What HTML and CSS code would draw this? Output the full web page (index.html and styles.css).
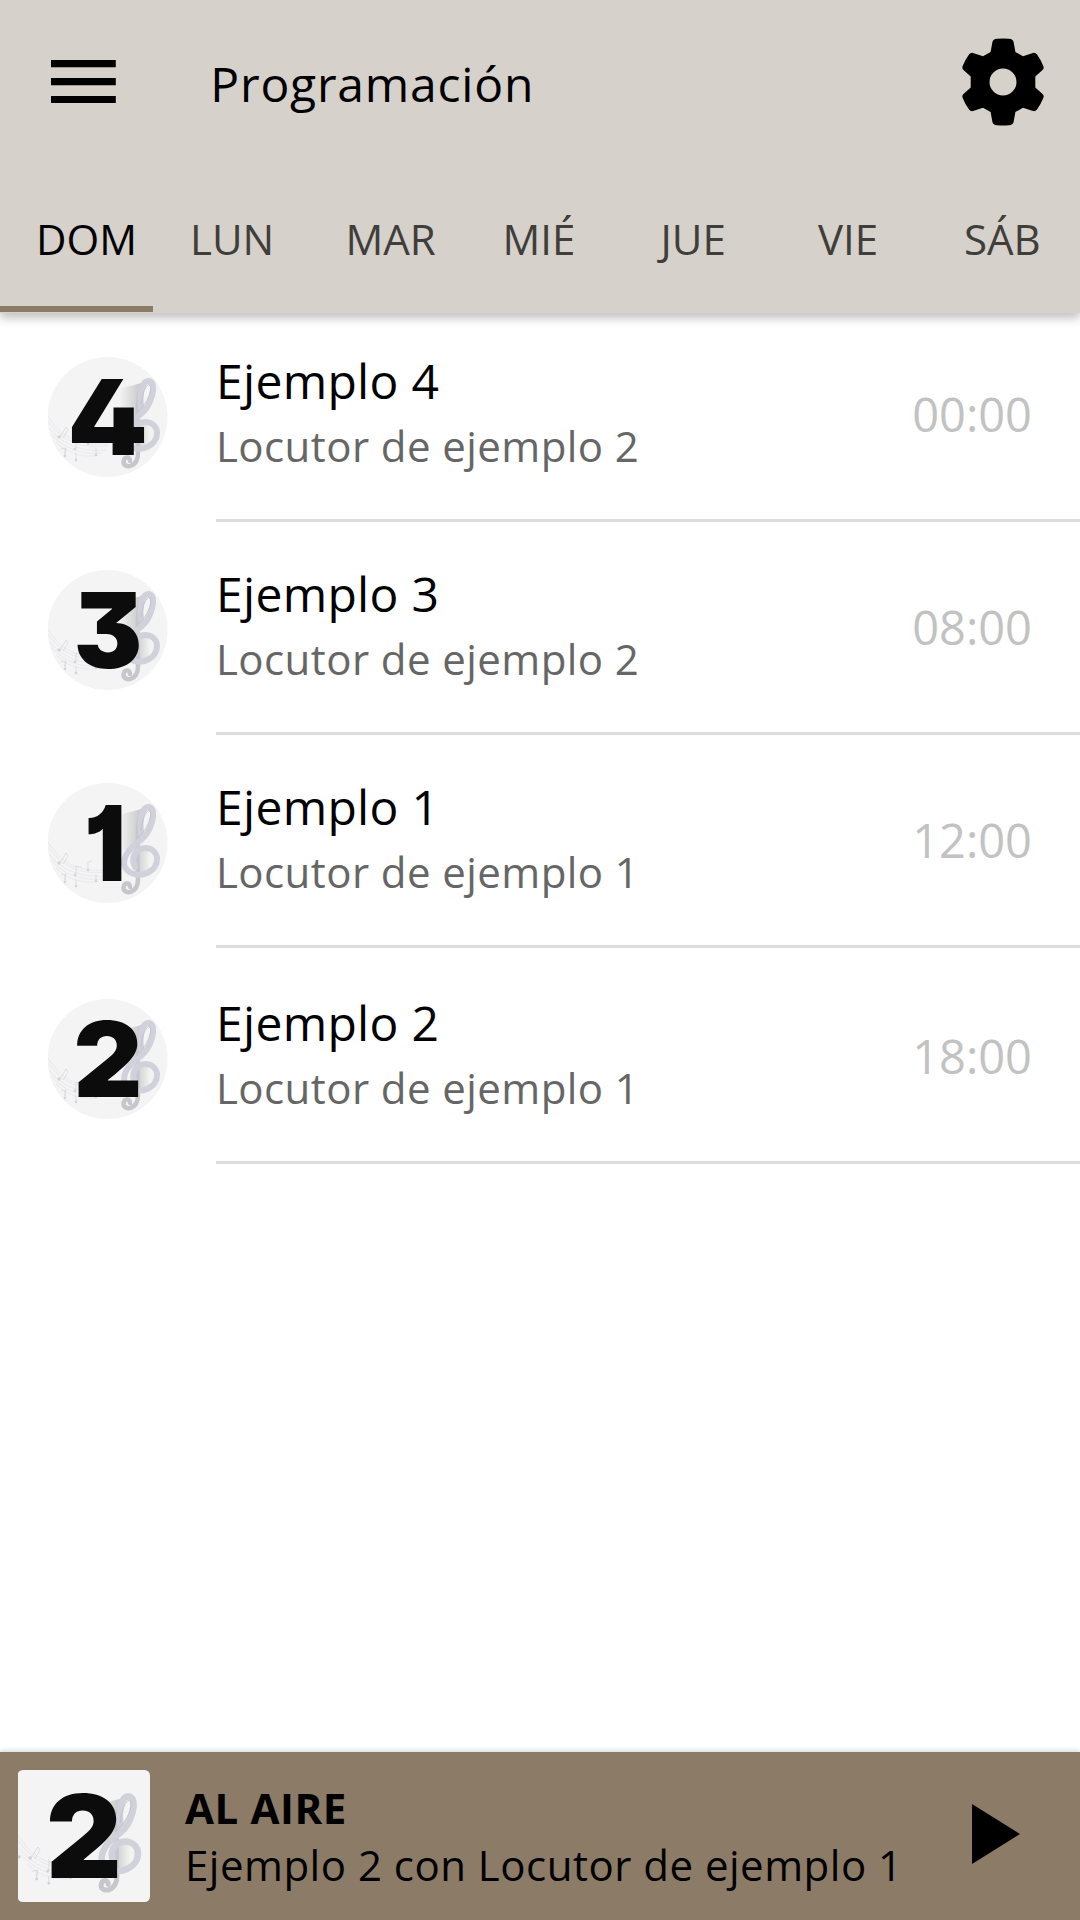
FILE: index.html
```html
<!DOCTYPE html>
<html lang="es">
<head>
<meta charset="utf-8">
<title>Programación</title>
<link rel="stylesheet" href="styles.css">
</head>
<body>
<svg class="defs" aria-hidden="true">
  <defs>
    <linearGradient id="shade" x1="0" x2="1">
      <stop offset="0" stop-color="#f4f4f4"/><stop offset="1" stop-color="#c0c0c1"/>
    </linearGradient>
    <linearGradient id="bowl" x1="0" x2="1">
      <stop offset="0" stop-color="#c0c0c2"/><stop offset=".7" stop-color="#f3f3f1"/>
    </linearGradient>
    <symbol id="music" viewBox="0 0 120 120">
      <rect width="120" height="120" fill="#f4f4f5"/>
      <path d="M71 32 97 25 91 62 74 68Z" fill="url(#shade)"/>
      <circle cx="97" cy="78" r="13" fill="url(#bowl)"/>
      <g fill="none" stroke="#e2e2e8" stroke-width=".6">
        <path d="M0 59C12 79 28 89 60 87M0 64C14 83 30 92 60 89M1 71C14 87 32 95 58 93M3 77C16 91 32 98 54 96M8 85C18 95 30 100 48 99"/>
      </g>
      <g fill="#d0d0d8" stroke="#d0d0d8" stroke-width=".6">
        <path d="M12 80 18 70 20 73 15 81M28 92V83L33 84M17 92V99M40 86V79L44 78M13 92 18 91 17 97M28 96V103M48 91V98" fill="none"/>
        <circle cx="11" cy="80" r="1.300"/><circle cx="1" cy="79" r="1.200"/><circle cx="27" cy="92" r="1"/><circle cx="40" cy="87" r="1"/><circle cx="17" cy="99" r="1"/><circle cx="28" cy="103" r="1"/><circle cx="48" cy="98" r="1"/>
      </g>
      <path d="M93 32C88 44 91 55 89 67L90 96C90 111 76 112 75.500 105C76 99 82 99 82 104" fill="none" stroke="#c6c6cc" stroke-width="4.500" stroke-linecap="round"/>
      <path d="M94 54C90 36 95 23 101 24C110 26 103 49 93 57C81 65 76 73 76 81C78 91 91 94 99 90C113 84 112 66 98 65C86 65 83 76 87 84" fill="none" stroke="#d0d1db" stroke-width="6" stroke-linecap="round" stroke-linejoin="round"/>
      <path d="M93 48C94 35 99 26 102 28C105 33 99 46 91 54" fill="none" stroke="#bfc0c8" stroke-width=".8"/>
    </symbol>
  </defs>
</svg>

<div class="app">
  <header class="header">
    <div class="toolbar">
      <svg class="menu-icon" viewBox="0 0 18 12"><path d="M0 0h18v2H0zM0 5h18v2H0zM0 10h18v2H0z"/></svg>
      <h1 class="title">Programación</h1>
      <svg class="gear-icon" viewBox="-41 -44 82 88">
        <path fill-rule="evenodd" d="M-6-43.300Q0-43.800 6-43.300Q10-43 10.600-40L12.400-30 20-25.700 30-29Q32.300-29.600 34-27.400Q38-22 40.300-16Q41.300-13.500 39.500-12L32.300-5.500V5.500L39.500 12Q41.300 13.500 40.300 16Q38 22 34 27.400Q32.300 29.600 30 29L20 25.700 12.400 30 10.600 40Q10 43 6 43.300Q0 43.800-6 43.300Q-10 43-10.600 40L-12.400 30-20 25.700-30 29Q-32.300 29.600-34 27.400Q-38 22-40.300 16Q-41.300 13.500-39.500 12L-32.300 5.500V-5.500L-39.500-12Q-41.300-13.500-40.300-16Q-38-22-34-27.400Q-32.300-29.600-30-29L-20-25.700-12.400-30-10.600-40Q-10-43-6-43.300ZM0-13.500A13.500 13.500 0 1 0 0 13.500A13.500 13.500 0 1 0 0-13.500Z"/>
      </svg>
    </div>
    <nav class="tabs">
      <span class="tab active">DOM</span><span class="tab">LUN</span><span class="tab">MAR</span><span class="tab">MIÉ</span><span class="tab">JUE</span><span class="tab">VIE</span><span class="tab">SÁB</span>
    </nav>
    <div class="indicator"></div>
  </header>

  <main class="list">
    <article class="row">
      <svg class="avatar" viewBox="0 0 120 120"><use class="disc" href="#music"/><text class="digit" text-anchor="middle" transform="translate(59.500 98) scale(1.100 1)">4</text></svg>
      <div class="body"><div class="text"><h2 class="name">Ejemplo 4</h2><p class="host">Locutor de ejemplo 2</p></div><time class="time">00:00</time></div>
    </article>
    <article class="row">
      <svg class="avatar" viewBox="0 0 120 120"><use class="disc" href="#music"/><text class="digit" text-anchor="middle" transform="translate(60 98) scale(.980 1)">3</text></svg>
      <div class="body"><div class="text"><h2 class="name">Ejemplo 3</h2><p class="host">Locutor de ejemplo 2</p></div><time class="time">08:00</time></div>
    </article>
    <article class="row">
      <svg class="avatar" viewBox="0 0 120 120"><use class="disc" href="#music"/><text class="digit" text-anchor="middle" transform="translate(57 98) scale(.900 1)">1</text></svg>
      <div class="body"><div class="text"><h2 class="name">Ejemplo 1</h2><p class="host">Locutor de ejemplo 1</p></div><time class="time">12:00</time></div>
    </article>
    <article class="row last">
      <svg class="avatar" viewBox="0 0 120 120"><use class="disc" href="#music"/><text class="digit" text-anchor="middle" transform="translate(60 98) scale(1.020 1)">2</text></svg>
      <div class="body"><div class="text"><h2 class="name">Ejemplo 2</h2><p class="host">Locutor de ejemplo 1</p></div><time class="time">18:00</time></div>
    </article>
  </main>

  <footer class="player">
    <svg class="cover" viewBox="0 0 120 120"><use class="tile" href="#music"/><text class="digit" text-anchor="middle" transform="translate(60 98) scale(1.020 1)">2</text></svg>
    <div class="now"><strong class="live">AL AIRE</strong><span class="show">Ejemplo 2 con Locutor de ejemplo 1</span></div>
    <svg class="play-icon" viewBox="0 0 48 60"><path d="M0 0 48 30 0 60Z"/></svg>
  </footer>
</div>
</body>
</html>
```
FILE: styles.css
```css
* { box-sizing: border-box; margin: 0; padding: 0; }
body { background: #fff; color: #000; font-family: "Open Sans", "Noto Sans", sans-serif; }
.defs { position: absolute; width: 0; height: 0; }
.app { display: flex; flex-direction: column; width: 1080px; height: 1920px; overflow: hidden; }

.header { height: 313px; flex: none; display: flex; flex-direction: column; background: #d6d1cb; box-shadow: 0 5px 9px rgba(0, 0, 0, .25); z-index: 1; }
.toolbar { height: 163px; display: flex; align-items: center; padding: 0 36px 0 51px; }
.menu-icon { width: 64.800px; height: 43.200px; }
.title { flex: 1; margin-left: 94.500px; padding-top: 4px; font-size: 48px; line-height: 64px; font-weight: 400; letter-spacing: .8px; }
.gear-icon { width: 82px; height: 88px; }
.tabs { height: 143px; display: grid; grid-template-columns: 154px 155.500px 157px 158px 157.500px 146px 116px; padding: 47px 0 0 36px; font-size: 42px; line-height: 58px; color: #403e3a; }
.active { color: #000; }
.indicator { width: 153px; height: 6px; background: #8c7b66; }

.list { flex: 1; margin-top: -4px; }
.row { height: 213px; display: flex; padding-left: 48px; }
.last { height: 216px; padding-top: 3px; }
.avatar { width: 120px; height: 120px; margin: 48px 48px 0 0; flex: none; overflow: visible; }
.disc { clip-path: circle(60px at 60px 60px); }
.tile { clip-path: inset(0 round 5px); }
.digit { font-family: Inter, sans-serif; font-size: 104.500px; font-weight: 900; fill: #0c0c0c; font-feature-settings: "cv01", "cv02", "cv09"; }
.body { flex: 1; display: flex; justify-content: space-between; border-bottom: 3px solid #ddd; }
.text { padding-top: 39px; }
.name { font-size: 48px; line-height: 66px; font-weight: 400; letter-spacing: .3px; }
.host { font-size: 42px; line-height: 64px; color: #666; letter-spacing: .43px; }
.time { margin: 72px 48px 0 0; font-size: 47px; line-height: 66px; color: #c2c2c2; }

.player { height: 168px; flex: none; display: flex; align-items: center; padding: 0 60px 0 18px; background: #8c7b66; box-shadow: 0 -1px 5px rgba(110, 145, 160, .4); }
.cover { width: 132px; height: 132px; flex: none; overflow: visible; }
.now { flex: 1; display: flex; flex-direction: column; margin-left: 35px; font-size: 42px; line-height: 57px; }
.live { font-weight: 700; letter-spacing: .6px; }
.show { letter-spacing: .5px; white-space: nowrap; }
.play-icon { width: 48px; height: 60px; margin-top: -4px; }
```
